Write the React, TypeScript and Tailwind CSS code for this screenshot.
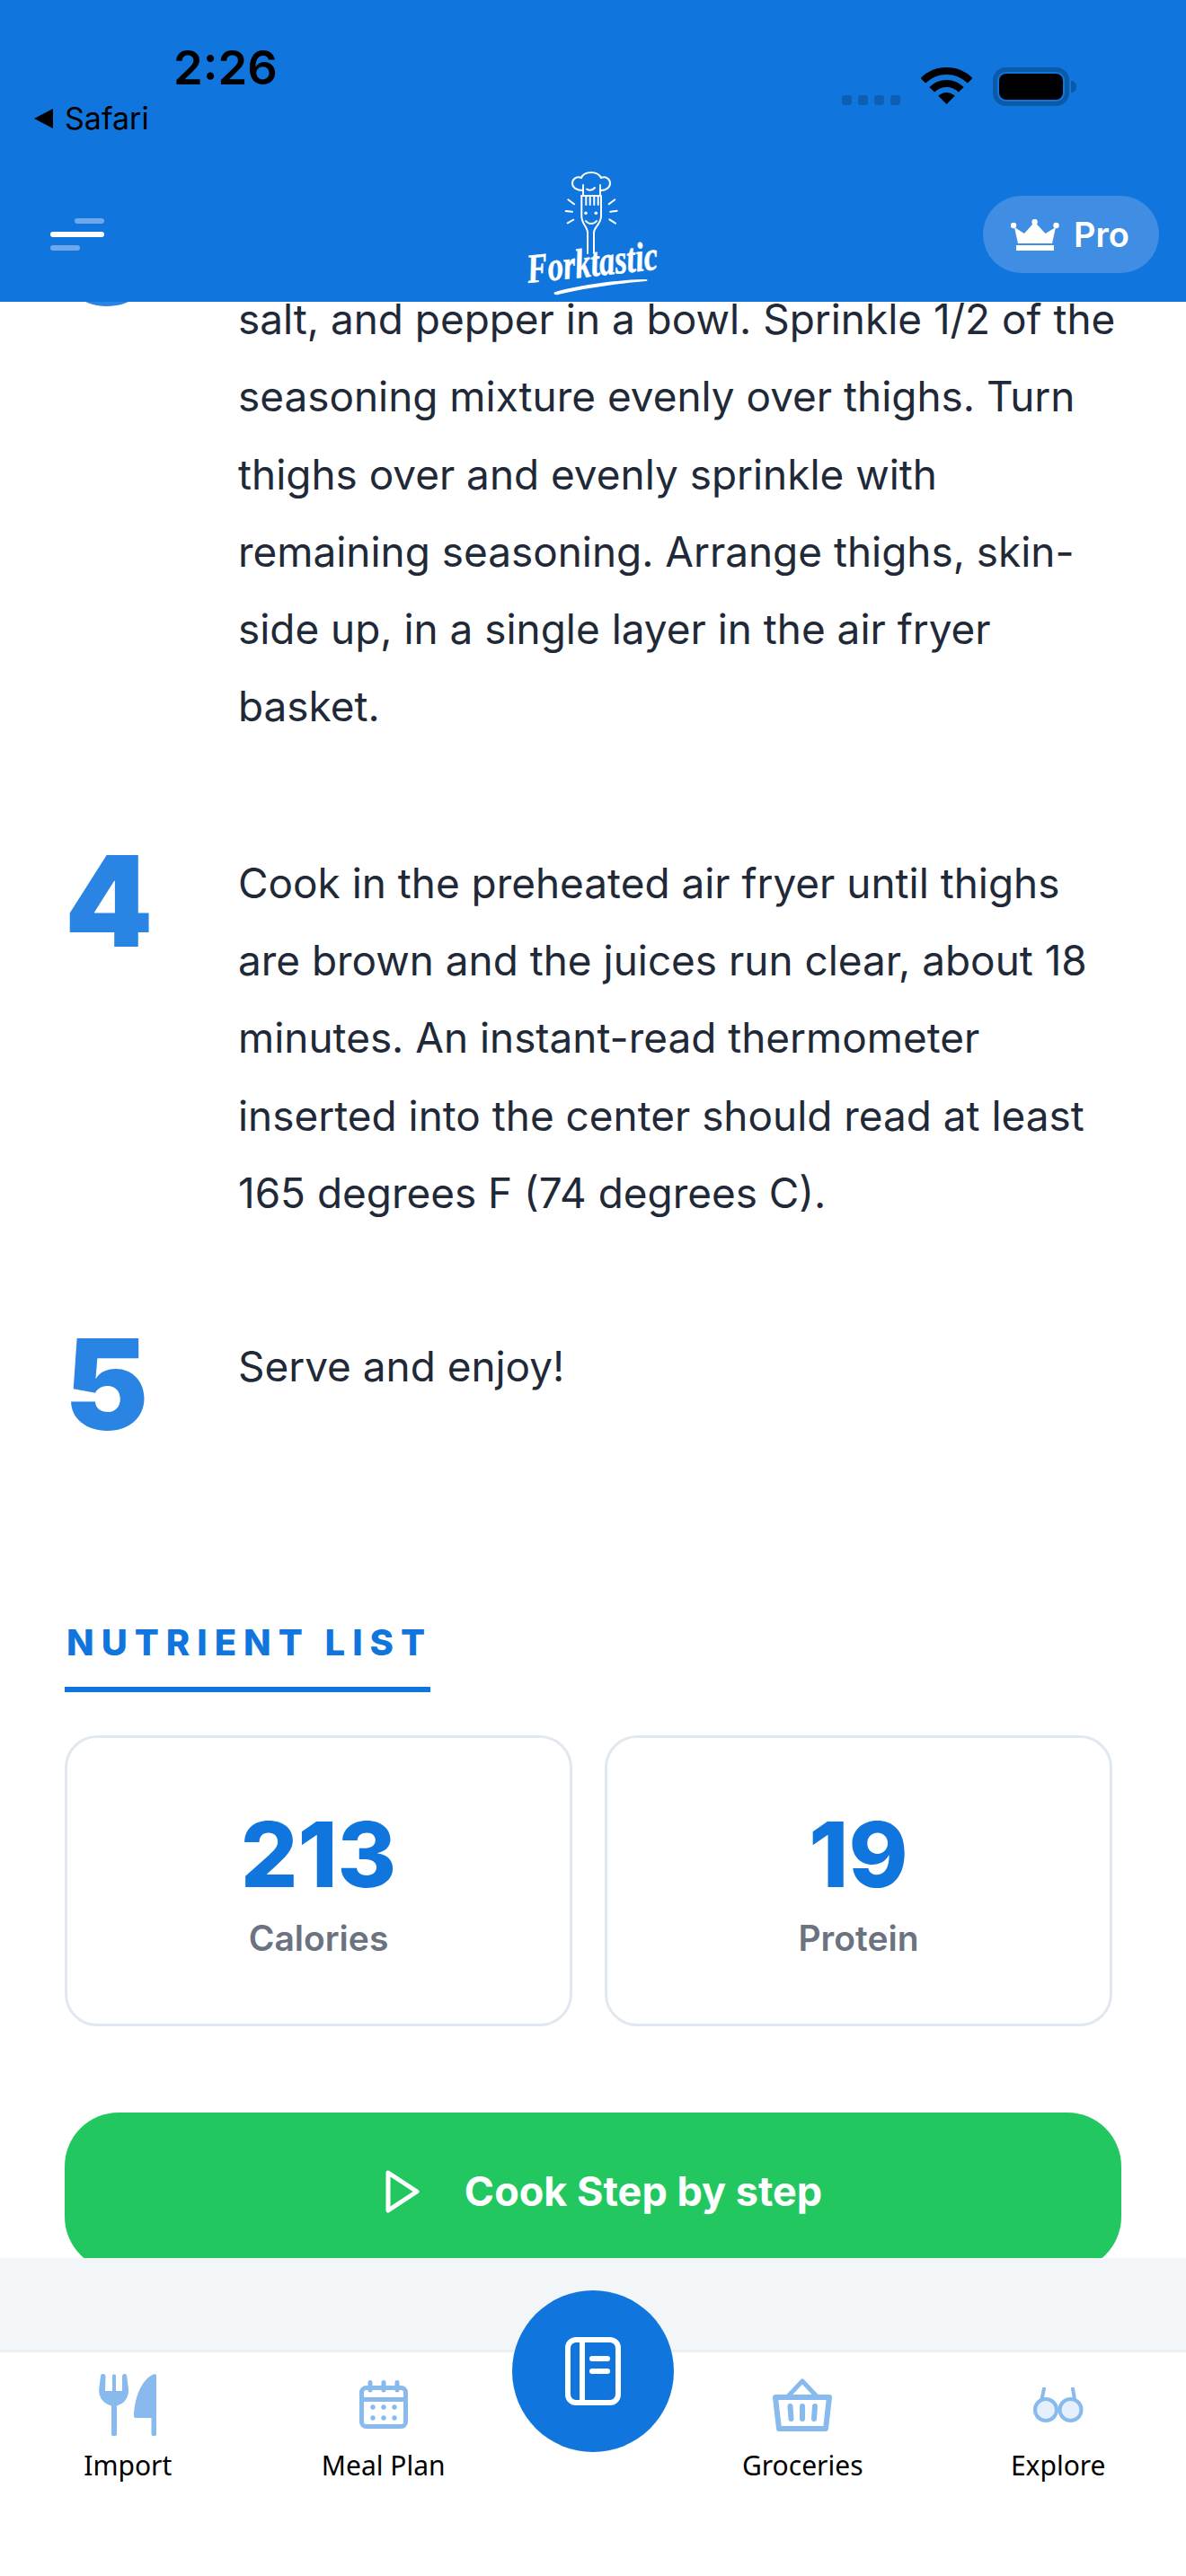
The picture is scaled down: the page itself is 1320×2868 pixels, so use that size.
const step3 = [
  "salt, and pepper in a bowl. Sprinkle 1/2 of the",
  "seasoning mixture evenly over thighs. Turn",
  "thighs over and evenly sprinkle with",
  "remaining seasoning. Arrange thighs, skin-",
  "side up, in a single layer in the air fryer",
  "basket.",
];
const step4 = [
  "Cook in the preheated air fryer until thighs",
  "are brown and the juices run clear, about 18",
  "minutes. An instant-read thermometer",
  "inserted into the center should read at least",
  "165 degrees F (74 degrees C).",
];

function Logo() {
  return (
    <svg width="150" height="140" viewBox="0 0 150 140" fill="none" stroke="#fff" strokeWidth="2" strokeLinecap="round">
      <path d="M64 21C57 21 52 18 52 13C52 8 57 5 62 7C64 2 70 1 73 1C78 1 82 3 84 7C89 5 94 8 94 13C94 18 89 21 84 21" />
      <path d="M64 15V26M83 15V26M62 27H84M68 19.500C71 21.500 74 21.500 77 18" />
      <path d="M62.300 28V50C62.300 58 69 62 69 68V91M84 28V50C84 58 76 62 76 68V91" />
      <path d="M67.300 28V37M71.700 28V37M76.300 28V37M80.700 28V37" />
      <path d="M67 55C70 59 76 59 79 55" />
      <path d="M47.300 31.300L54 36.300M44.700 44L52 44.700M46.700 57.300L53.300 53.700M92.700 36.300L99.300 31.300M94.300 44.700L101.700 43.700M93.300 53.300L100 57.700" />
      <circle cx="67" cy="46.300" r="1.800" fill="#fff" stroke="none" />
      <circle cx="78.300" cy="46.300" r="1.800" fill="#fff" stroke="none" />
      <text
        x="3"
        y="124"
        transform="rotate(-6 3 124)"
        textLength="146"
        lengthAdjust="spacingAndGlyphs"
        fill="#fff"
        stroke="#fff"
        strokeWidth="0.6"
        fontFamily="'Liberation Serif', serif"
        fontStyle="italic"
        fontWeight="700"
        fontSize="46"
      >
        Forktastic
      </text>
      <path d="M33 134C60 126 108 120 134 120C136 120 136 122 134 122C108 124 64 130 36 137C32 138 30 135 33 134Z" fill="#fff" stroke="none" />
    </svg>
  );
}

function Wifi() {
  return (
    <svg width="57" height="41" viewBox="0 0 57 41" fill="none" stroke="#000" strokeWidth="8">
      <path d="M2.300 14.800A37 37 0 0 1 54.700 14.800" />
      <path d="M12.200 24.700A23 23 0 0 1 44.800 24.700" />
      <path d="M28.500 41L19.300 31.800A13 13 0 0 1 37.700 31.800Z" fill="#000" stroke="none" />
    </svg>
  );
}

function Battery() {
  return (
    <svg width="93" height="43" viewBox="0 0 93 43">
      <rect x="2.500" y="2.500" width="80" height="38" rx="12" fill="none" stroke="#0b5aa8" strokeWidth="5" />
      <rect x="7" y="7" width="71" height="29" rx="8" fill="#000" />
      <path d="M87 15C91 15 93 18 93 21.500C93 25 91 28 87 28Z" fill="#0b5aa8" />
    </svg>
  );
}

function Crown() {
  return (
    <svg width="54" height="35" viewBox="0 0 54 35" fill="#fff">
      <path d="M4 9L15 16L26.600 3L38.500 16L50 9L46 27H8Z" />
      <circle cx="3" cy="7" r="3.200" />
      <circle cx="26.600" cy="3" r="3.200" />
      <circle cx="50.500" cy="7" r="3.200" />
      <rect x="6" y="29" width="42" height="6" />
    </svg>
  );
}

function ForkKnife() {
  return (
    <svg width="64" height="69" viewBox="0 0 64 69" fill="#88baee">
      <path d="M4 0C6 0 7.500 0.500 7.500 3L7 19H15V2C15 0 19 0 19 2V19H26L26 3C26 0.500 27.500 0 29 0C30.500 0 31 1 31.300 3L33 17C33.500 26 29 33 20 35.500V67C20 70 14 70 14 67V35.500C5 33 -0.500 26 0.200 17L2 3C2.200 1 2.500 0 4 0Z" />
      <path d="M62 0C63.500 0 64 1 64 2.500V67C64 70 58.500 70 58.500 67V49H41C39.500 49 39 48 39 46.500C39.500 30 46 6 62 0Z" />
    </svg>
  );
}

function CalendarIcon() {
  return (
    <svg width="54" height="54" viewBox="0 0 54 54" fill="none" stroke="#88baee" strokeWidth="5">
      <rect x="2.500" y="8.500" width="49" height="43" rx="5" />
      <path d="M3 21.500H51" />
      <path d="M12 2.500V11M27 2.500V11M42 2.500V11" strokeLinecap="round" />
      <g fill="#88baee" stroke="none">
        <circle cx="15" cy="30" r="2.700" />
        <circle cx="27" cy="30" r="2.700" />
        <circle cx="39" cy="30" r="2.700" />
        <circle cx="15" cy="42" r="2.700" />
        <circle cx="27" cy="42" r="2.700" />
        <circle cx="39" cy="42" r="2.700" />
      </g>
    </svg>
  );
}

function Basket() {
  return (
    <svg width="66" height="59" viewBox="0 0 66 59" fill="none" stroke="#88baee" strokeWidth="6" strokeLinejoin="round">
      <path d="M3 21H63L59 56H7Z" />
      <path d="M17 20L33 3L49 20" strokeWidth="5" />
      <path d="M19.500 31L20.500 45M33 31V45M47 31L46 45" strokeLinecap="round" />
    </svg>
  );
}

function Glasses() {
  return (
    <svg width="56" height="39" viewBox="0 0 56 39" fill="none" stroke="#88baee" strokeWidth="4">
      <circle cx="14" cy="25" r="12" fill="#e5f0fc" />
      <circle cx="41.500" cy="25" r="12" fill="#e5f0fc" />
      <path d="M12 1.500L9.500 13M44 1.500L46 13" strokeLinecap="round" />
    </svg>
  );
}

function Tab({ label, children }: { label: string; children: React.ReactNode }) {
  return (
    <div className="flex-1 flex flex-col items-center pt-[20px]">
      <div className="h-[76px] flex items-center justify-center">{children}</div>
      <div className="mt-[10px] text-[30px] leading-[40px] text-black font-['Noto_Sans',sans-serif]">{label}</div>
    </div>
  );
}

function Step({ num, lines, hiddenLine }: { num: string; lines: string[]; hiddenLine?: boolean }) {
  return (
    <div className="flex">
      <div className="w-[193px] shrink-0 text-[140px] leading-[124px] font-black text-[#2a84e4]">{num}</div>
      <div className={hiddenLine ? "pt-[86px] text-[45.9px] leading-[86.3px] text-[#1f2937]" : "text-[45.9px] leading-[86.3px] text-[#1f2937]"}>
        {lines.map((line) => (
          <div key={line} className="whitespace-nowrap">
            {line}
          </div>
        ))}
      </div>
    </div>
  );
}

function Nutrient({ value, label }: { value: string; label: string }) {
  return (
    <div className="h-[324px] border-[3px] border-[#e2e8f0] rounded-[36px] pt-[78px] flex flex-col items-center">
      <div className="text-[100px] leading-[104px] font-extrabold text-[#1075dc]">{value}</div>
      <div className="mt-[18px] text-[39px] leading-[46px] font-semibold text-[#6b7280]">{label}</div>
    </div>
  );
}

export default function App() {
  return (
    <div className="w-[1320px] h-[2868px] flex flex-col overflow-hidden bg-white font-['Inter',sans-serif]">
      {/* Header */}
      <header className="h-[336px] shrink-0 bg-[#1075dc] relative z-10">
        <div className="h-[186px] flex justify-between">
          <div className="pl-[38px] pt-[42px]">
            <div className="ml-[155px] text-[52.500px] leading-[66px] font-semibold text-black">2:26</div>
            <div className="mt-[4px] flex items-center gap-[13px] text-[34px] leading-[40px] text-black">
              <div className="w-0 h-0 border-y-[11px] border-y-transparent border-r-[21px] border-r-black" />
              <span>Safari</span>
            </div>
          </div>
          <div className="pt-[75px] pr-[122px] flex items-start">
            <div className="mt-[31px] flex gap-[7px] mr-[23px]">
              <div className="w-[11px] h-[11px] rounded-[3px] bg-[#0d5fb4]" />
              <div className="w-[11px] h-[11px] rounded-[3px] bg-[#0d5fb4]" />
              <div className="w-[11px] h-[11px] rounded-[3px] bg-[#0d5fb4]" />
              <div className="w-[11px] h-[11px] rounded-[3px] bg-[#0d5fb4]" />
            </div>
            <div className="mr-[23px]">
              <Wifi />
            </div>
            <Battery />
          </div>
        </div>
        <div className="h-[150px] grid grid-cols-[1fr_auto_1fr] items-center">
          <div className="pl-[56px] flex flex-col gap-[9px] w-[116px]">
            <div className="w-[33px] h-[6px] rounded-full bg-[#6ea8ea] self-end" />
            <div className="w-[60px] h-[6px] rounded-full bg-white" />
            <div className="w-[33px] h-[6px] rounded-full bg-[#6ea8ea]" />
          </div>
          <Logo />
          <div className="flex justify-end pr-[30px]">
            <div className="w-[196px] h-[86px] rounded-full bg-[#3f8ee4] flex items-center pl-[31px] gap-[16px]">
              <Crown />
              <span className="text-[38px] leading-[44px] font-semibold text-white">Pro</span>
            </div>
          </div>
        </div>
      </header>

      {/* Scrolled recipe content */}
      <main className="flex-1 overflow-hidden">
        <div className="-mt-[109px] px-[72px]">
          <div className="flex flex-col">
            <Step num="3" lines={step3} hiddenLine />
            <div className="h-[110px]" />
            <Step num="4" lines={step4} />
            <div className="h-[107px]" />
            <Step num="5" lines={["Serve and enjoy!"]} />
          </div>

          <div className="mt-[202px] w-[407px] border-b-[6px] border-[#1075dc] pb-[25px] pl-[2px] text-[40px] leading-[48px] font-extrabold tracking-[8px] text-[#1075dc] whitespace-nowrap">
            NUTRIENT LIST
          </div>

          <div className="mt-[48px] w-[1166px] grid grid-cols-2 gap-[36px]">
            <Nutrient value="213" label="Calories" />
            <Nutrient value="19" label="Protein" />
          </div>

          <div className="mt-[96px] w-[1176px] h-[176px] rounded-[60px] bg-[#22c760] flex items-center justify-center gap-[50px] pl-[24px]">
            <svg width="38" height="48" viewBox="0 0 38 48" fill="none" stroke="#fff" strokeWidth="5" strokeLinejoin="round">
              <path d="M3 3L35 24L3 45Z" />
            </svg>
            <span className="text-[45px] leading-[52px] font-bold text-white">Cook Step by step</span>
          </div>
        </div>
      </main>

      {/* Bottom bar */}
      <footer className="h-[354px] shrink-0 relative">
        <div className="h-[102px] bg-[#f3f6f9]" />
        <div className="h-[252px] bg-white border-t-[3px] border-[#eeeeee] flex">
          <Tab label="Import">
            <ForkKnife />
          </Tab>
          <Tab label="Meal Plan">
            <CalendarIcon />
          </Tab>
          <div className="w-[182px] shrink-0" />
          <Tab label="Groceries">
            <Basket />
          </Tab>
          <Tab label="Explore">
            <Glasses />
          </Tab>
        </div>
        <div className="absolute left-[570px] top-[36px] w-[180px] h-[180px] rounded-full bg-[#1075dc] flex items-center justify-center">
          <svg width="62" height="76" viewBox="0 0 62 76" fill="none" stroke="#fff" strokeWidth="6" strokeLinecap="round">
            <rect x="3" y="3" width="56" height="70" rx="9" />
            <path d="M19 4V72" />
            <path d="M30 24H47M30 38H47" />
          </svg>
        </div>
      </footer>
    </div>
  );
}
